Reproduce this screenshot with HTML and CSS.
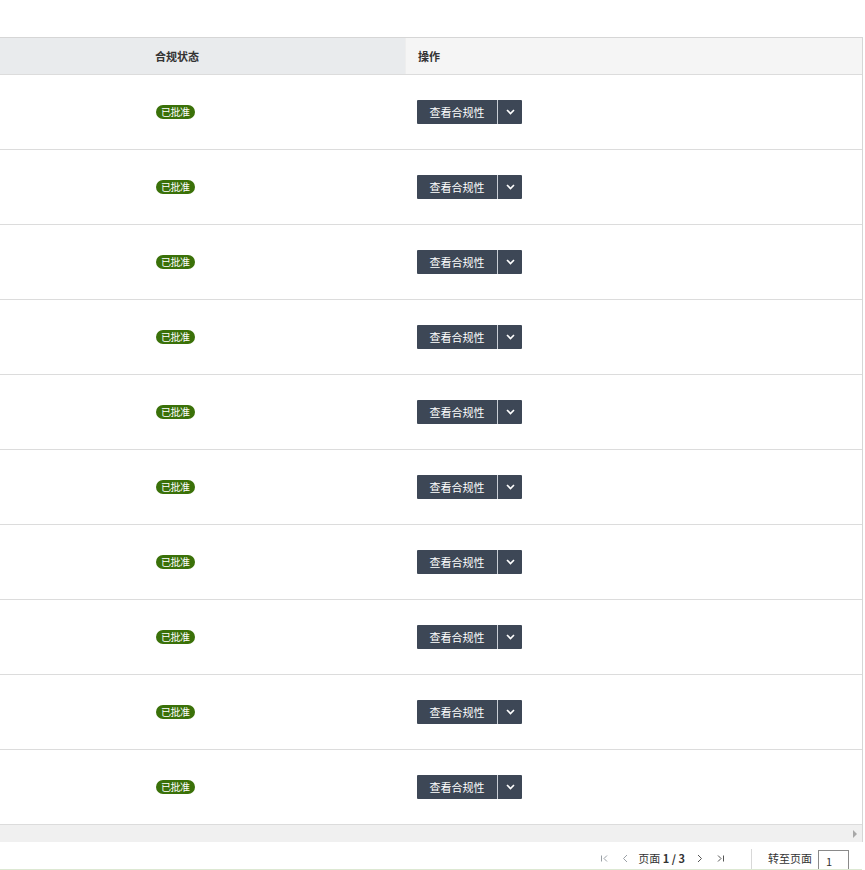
FILE: index.html
```html
<!DOCTYPE html>
<html lang="zh-CN">
<head>
<meta charset="utf-8">
<title>合规</title>
<link rel="stylesheet" href="styles.css">
</head>
<body>
<div class="top"></div>
<div class="grid">
  <div class="row head">
    <div class="c spacer"></div>
    <div class="c status">合规状态</div>
    <div class="c ops">操作</div>
  </div>
  <div class="rows" id="rows"></div>
  <div class="hscroll"><span class="arrow"></span></div>
</div>
<div class="pager">
  <div class="nav">
    <span class="ic">
      <svg width="9" height="9" viewBox="0 0 9 9"><path d="M1.5 1.5v6M7 1.5L4 4.5l3 3" fill="none" stroke="#9aa0a6" stroke-width="1"/></svg>
    </span>
    <span class="ic">
      <svg width="9" height="9" viewBox="0 0 9 9"><path d="M6 1L2.5 4.5 6 8" fill="none" stroke="#9aa0a6" stroke-width="1"/></svg>
    </span>
    <span class="pg">页面 <b>1 / 3</b></span>
    <span class="ic">
      <svg width="9" height="9" viewBox="0 0 9 9"><path d="M3 1l3.5 3.5L3 8" fill="none" stroke="#555" stroke-width="1"/></svg>
    </span>
    <span class="ic">
      <svg width="9" height="9" viewBox="0 0 9 9"><path d="M2 1.5l3 3-3 3M7.5 1.5v6" fill="none" stroke="#555" stroke-width="1"/></svg>
    </span>
  </div>
  <div class="sep"></div>
  <div class="goto">转至页面 <span class="inp">1</span></div>
</div>
<script>
var rows = document.getElementById('rows');
var html = '';
for (var i = 0; i < 10; i++) {
  html += '<div class="row body"><div class="c spacer"></div>' +
    '<div class="c status"><span class="badge">已批准</span></div>' +
    '<div class="c ops"><span class="btn"><span class="main">查看合规性</span><span class="dd">' +
    '<svg width="9" height="6" viewBox="0 0 9 6"><path d="M1 1l3.5 3.5L8 1" fill="none" stroke="#fff" stroke-width="1.6"/></svg>' +
    '</span></span></div></div>';
}
rows.innerHTML = html;
</script>
</body>
</html>
```

FILE: styles.css
```css
html, body {
  margin: 0;
  padding: 0;
  background: #fff;
  font-family: "Noto Sans CJK SC", "Noto Sans", sans-serif;
  color: #333;
  font-size: 11px;
}
.top { height: 37px; }
.grid {
  width: 862px;
  border-top: 1px solid #d6d6d6;
  border-right: 1px solid #d6d6d6;
}
.row {
  display: flex;
  border-bottom: 1px solid #dcdcdc;
}
.row.head { height: 36px; }
.row.body { height: 74px; }
.c {
  display: flex;
  align-items: center;
}
.spacer { width: 142px; }
.status { width: 250px; padding-left: 13px; }
.ops { flex: 1; padding-left: 12px; }
.head .spacer, .head .status { background: #e9ebed; }
.head .ops { background: #f5f5f5; border-left: 1px solid #eeeeee; }
.head .c { font-weight: 600; color: #333; }
.body .ops { padding-left: 12px; }
.badge {
  display: inline-block;
  background: #3a7109;
  color: #fff;
  font-size: 10px;
  line-height: 14px;
  height: 14px;
  padding: 0 5px 0 5px;
  border-radius: 7px;
  margin-left: 1px;
  letter-spacing: -0.5px;
}
.btn {
  display: inline-flex;
  height: 24px;
  background: #3d4756;
  border-radius: 1px;
  color: #fff;
}
.btn .main {
  width: 80px;
  display: flex;
  align-items: center;
  justify-content: center;
  font-size: 11px;
}
.btn .dd {
  width: 24px;
  border-left: 1px solid #c9ced6;
  display: flex;
  align-items: center;
  justify-content: center;
}
.hscroll {
  height: 17px;
  background: #f0f0f0;
  display: flex;
  justify-content: flex-end;
  align-items: center;
  padding-right: 5px;
}
.arrow {
  width: 0; height: 0;
  border-top: 4px solid transparent;
  border-bottom: 4px solid transparent;
  border-left: 4px solid #a8a8a8;
}
.pager {
  width: 862px;
  height: 27px;
  border-bottom: 1px solid #dce8d2;
  display: flex;
  justify-content: flex-end;
  align-items: flex-end;
  overflow: hidden;
}
.nav {
  display: flex;
  align-items: center;
  height: 20px;
  margin-bottom: 1px;
}
.ic {
  width: 21px;
  display: flex;
  justify-content: center;
  align-items: center;
}
.pg { padding: 0 4px 0 2px; color: #333; }
.pg b { font-weight: bold; }
.sep {
  width: 1px;
  height: 20px;
  background: #d8d8d8;
  margin: 0 16px 0 20px;
}
.goto {
  display: flex;
  align-items: center;
  height: 20px;
  margin-bottom: 1px;
  margin-right: 13px;
}
.inp {
  display: inline-block;
  width: 22px;
  height: 22px;
  border: 1px solid #8a8a8a;
  margin-left: 6px;
  margin-bottom: -8px;
  padding-left: 7px;
  line-height: 20px;
  box-sizing: content-box;
}
```
